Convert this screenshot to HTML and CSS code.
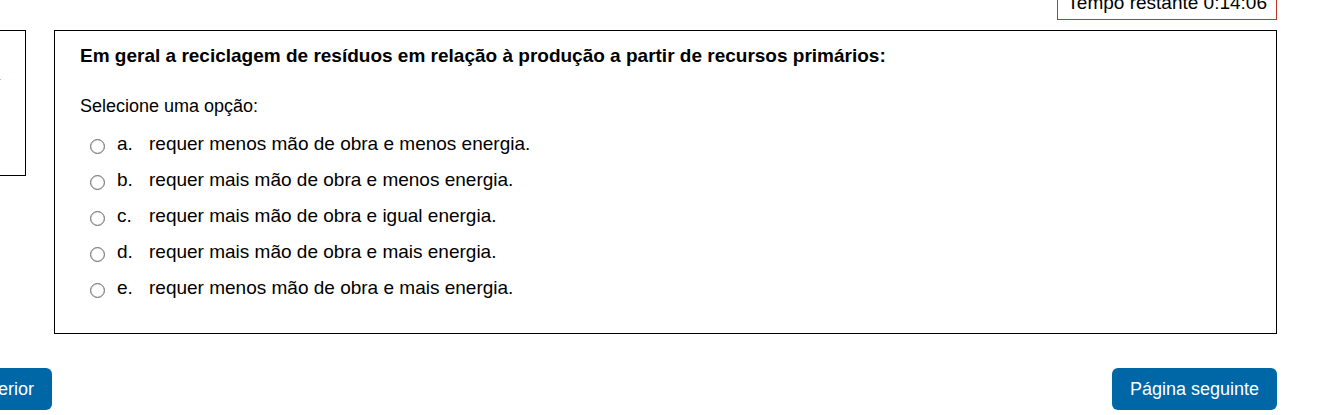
FILE: index.html
```html
<!DOCTYPE html>
<html lang="pt">
<head>
<meta charset="utf-8">
<title>Questionário</title>
<link rel="stylesheet" href="styles.css">
</head>
<body>
<div class="page">
  <header class="topbar">
    <div class="timer" role="timer">Tempo restante 0:14:06</div>
  </header>
  <main class="question-row">
    <aside class="info"><span class="info-mark"></span></aside>
    <form class="question" id="quiz">
      <h1 class="question-text">Em geral a reciclagem de resíduos em relação à produção a partir de recursos primários:</h1>
      <fieldset class="options">
        <legend class="prompt">Selecione uma opção:</legend>
        <div class="option"><input class="radio" type="radio" name="answer" id="a"><label class="label" for="a"><span class="letter">a.</span><span>requer menos mão de obra e menos energia.</span></label></div>
        <div class="option"><input class="radio" type="radio" name="answer" id="b"><label class="label" for="b"><span class="letter">b.</span><span>requer mais mão de obra e menos energia.</span></label></div>
        <div class="option"><input class="radio" type="radio" name="answer" id="c"><label class="label" for="c"><span class="letter">c.</span><span>requer mais mão de obra e igual energia.</span></label></div>
        <div class="option"><input class="radio" type="radio" name="answer" id="d"><label class="label" for="d"><span class="letter">d.</span><span>requer mais mão de obra e mais energia.</span></label></div>
        <div class="option"><input class="radio" type="radio" name="answer" id="e"><label class="label" for="e"><span class="letter">e.</span><span>requer menos mão de obra e mais energia.</span></label></div>
      </fieldset>
    </form>
  </main>
  <nav class="pager">
    <div class="previous"><button class="button" type="button">Página anterior</button></div>
    <button class="button" type="submit" form="quiz">Página seguinte</button>
  </nav>
</div>
</body>
</html>
```
FILE: styles.css
```css
* { box-sizing: border-box; }

body {
  margin: 0;
  background: #fff;
  color: #000;
  font: 19px/24px "Liberation Sans", Arial, sans-serif;
}

.page {
  padding-right: 63px;
  overflow: hidden;
}

/* The timer hangs from the bottom of the bar, its top scrolled away. */
.topbar {
  display: flex;
  justify-content: flex-end;
  align-items: flex-end;
  height: 20px;
  margin-bottom: 10px;
  overflow: hidden;
}

.timer {
  padding: 4px 9px;
  border: 1px solid #ca3120;
}

.question-row {
  display: flex;
  align-items: flex-start;
  gap: 28px;
}

.info {
  flex: none;
  width: 26px;
  height: 146px;
  padding-top: 48px;
  border: 1px solid #000;
  border-left: 0;
}

.info-mark {
  display: block;
  width: 1px;
  height: 1px;
  background: #9bc4e2;
}

.question {
  flex: 1;
  padding: 13px 25px 27px;
  border: 1px solid #000;
}

.question-text {
  margin: 0 0 26px;
  font-size: 19px;
  line-height: 24px;
}

.options {
  margin: 0;
  padding: 0;
  border: 0;
}

.prompt {
  padding: 0;
  margin-bottom: 8px;
  font-size: 18px;
}

.option {
  display: flex;
  align-items: center;
  height: 36px;
  padding-left: 10px;
}

.radio {
  flex: none;
  width: 15px;
  height: 15px;
  margin: 4px 12px 0 0;
  appearance: none;
  border: 1px solid #707070;
  border-radius: 50%;
  box-shadow: inset 0 0 1px #707070;
}

.radio:checked {
  border: 4px solid #0067a7;
}

.label { display: flex; }

.letter {
  flex: none;
  width: 32px;
}

.pager {
  display: flex;
  justify-content: space-between;
  margin: 34px 0 5px;
}

.previous {
  display: flex;
  justify-content: flex-end;
  width: 52px;
}

.button {
  flex: none;
  height: 42px;
  padding: 0 18px;
  border: 0;
  border-radius: 6px;
  background: #0067a7;
  color: #fff;
  font: 18px/24px "Liberation Sans", Arial, sans-serif;
  white-space: nowrap;
}
```
